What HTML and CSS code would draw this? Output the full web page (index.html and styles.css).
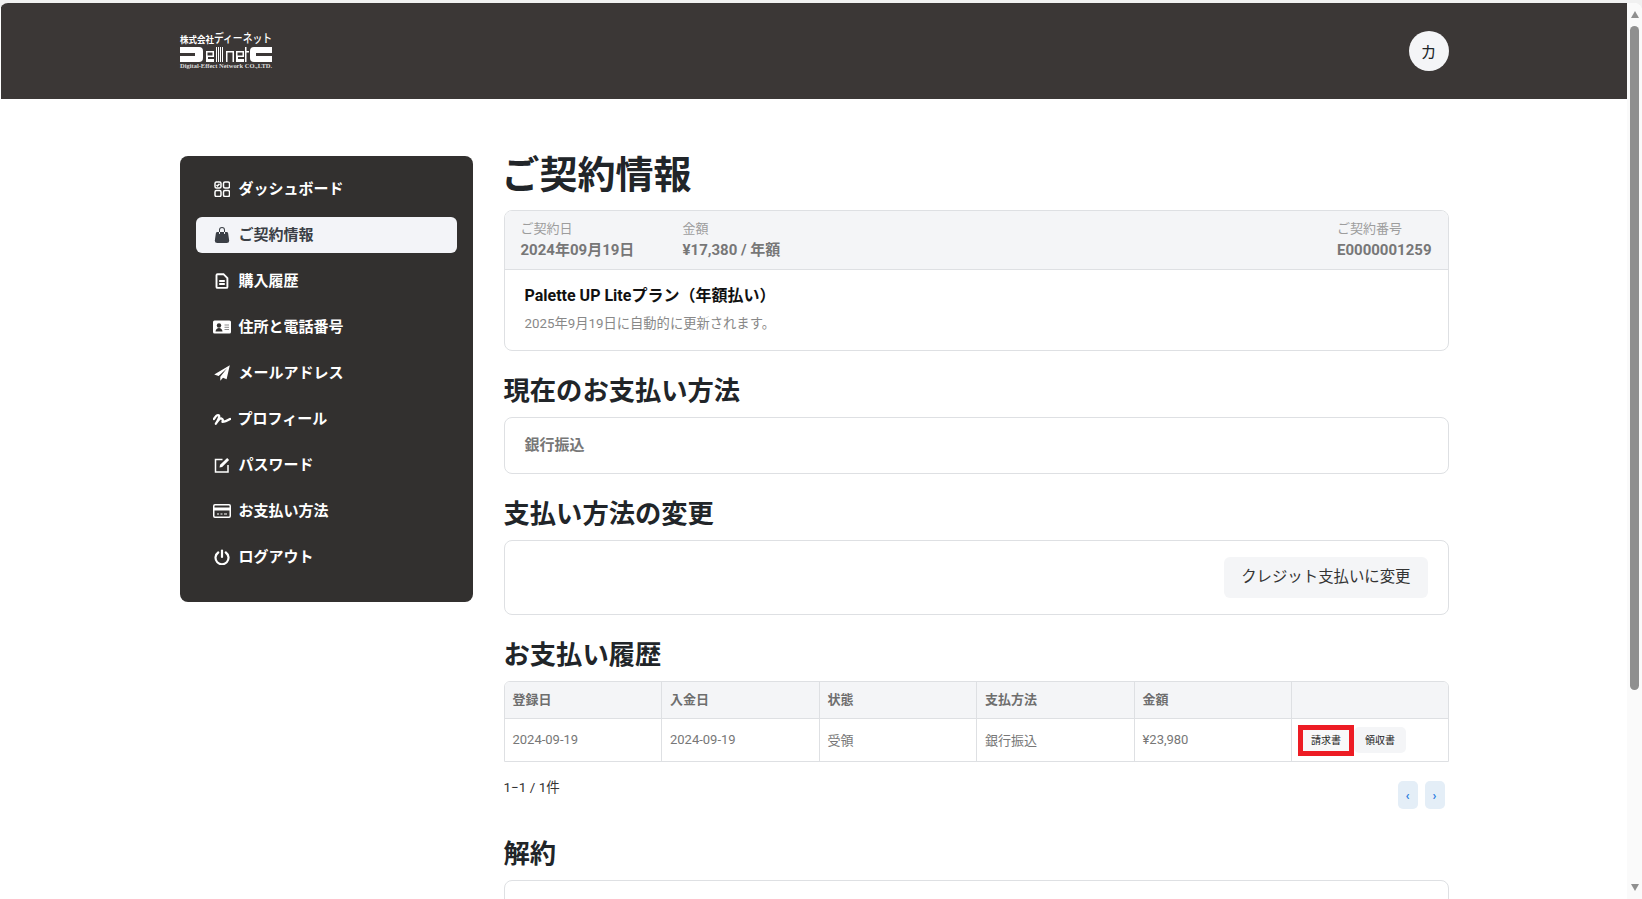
FILE: index.html
```html
<!DOCTYPE html>
<html lang="ja">
<head>
  <meta charset="utf-8">
  <title>ご契約情報</title>
  <link rel="stylesheet" href="styles.css">
</head>
<body>
  <div class="window">
    <div class="page">
      <header class="topbar">
        <div class="container topbar-inner">
          <svg class="logo" width="92" height="36" viewBox="0 0 92 36" aria-label="Dellnet">
            <text class="logo-jp" x="0" y="10" textLength="34" lengthAdjust="spacingAndGlyphs">株式会社</text>
            <text class="logo-kana" x="34" y="10" textLength="58" lengthAdjust="spacingAndGlyphs">ディーネット</text>
            <g fill="#fff">
              <path d="M0 14h19q4 0 4 4v7q0 4-4 4H0v-6h15v-3H0z"/>
              <path d="M26 18h8v6h-6v2h6v3h-8zM27.500 19.500v3h5v-3z" fill-rule="evenodd"/>
              <path d="M36 14h1v15h-1zM38 14h1v15h-1zM40 14h1v15h-1zM42 14h1v15h-1z"/>
              <path d="M46 18h8v11h-1.500v-9.500h-5v9.500h-1.500z"/>
              <path d="M56 18h8v6h-6v2h6v3h-8zM57.500 19.500v3h5v-3z" fill-rule="evenodd"/>
              <path d="M65 14h1.500v4h2.500v1.500h-2.500v9.500h-1.500z"/>
              <path d="M92 14H74q-4 0-4 4v7q0 4 4 4h18v-6H76v-3h16z"/>
            </g>
            <text class="logo-en" x="0" y="35" textLength="92" lengthAdjust="spacingAndGlyphs">Digital-Effect Network CO.,LTD.</text>
          </svg>
          <div class="avatar">カ</div>
        </div>
      </header>

      <div class="container content">
        <nav class="sidebar">
          <a class="nav-item">
            <svg class="nav-icon" viewBox="0 0 16 16" fill="none" stroke="currentColor" stroke-width="1.500"><rect x="1" y="1" width="6" height="6" rx="1.500"/><rect x="9.500" y="1" width="6" height="6" rx="1.500"/><rect x="1" y="9.500" width="6" height="6" rx="1.500"/><rect x="9.500" y="9.500" width="6" height="6" rx="1.500"/><path d="M2.500 4l1 1 2-2.200"/></svg>
            ダッシュボード
          </a>
          <a class="nav-item active">
            <svg class="nav-icon" viewBox="0 0 16 16" fill="currentColor"><path d="M8 1a2 2 0 0 0-2 2v2H5V3a3 3 0 1 1 6 0v2h-1V3a2 2 0 0 0-2-2zM5 5H3.360a1.500 1.500 0 0 0-1.483 1.277L.85 13.130A2.500 2.500 0 0 0 3.322 16h9.355a2.500 2.500 0 0 0 2.473-2.870l-1.028-6.853A1.500 1.500 0 0 0 12.640 5H11v1.500a.5.5 0 0 1-1 0V5H6v1.500a.5.5 0 0 1-1 0V5z"/></svg>
            ご契約情報
          </a>
          <a class="nav-item">
            <svg class="nav-icon" viewBox="0 0 16 16" fill="none" stroke="currentColor" stroke-width="1.900"><path d="M2.500 2.200a1 1 0 0 1 1-1h6l3.900 3.900v8.800a1 1 0 0 1-1 1H3.500a1 1 0 0 1-1-1z"/><path d="M5.200 8h5.600M5.200 11h5.600"/></svg>
            購入履歴
          </a>
          <a class="nav-item">
            <svg class="nav-icon icon-wide" viewBox="0 0 18 13"><rect width="18" height="13" rx="1.500" fill="currentColor"/><circle cx="6" cy="5" r="2.200" fill="#32302f"/><path d="M2.500 11q.5-3.500 3.500-3.500t3.500 3.500z" fill="#32302f"/><path d="M11.500 4.500h4.500M11.500 6.800h4.500M11.500 9h4.500" stroke="#8a8a8a" stroke-width="1"/></svg>
            住所と電話番号
          </a>
          <a class="nav-item">
            <svg class="nav-icon icon-wide" viewBox="0 0 16 16" fill="currentColor"><path d="M15.800.2L.2 9.400l4.400 1.700L13 3.200 6.300 11.800v3.900l2.700-3 3.600 1.600z"/></svg>
            メールアドレス
          </a>
          <a class="nav-item item-tight">
            <svg class="nav-icon icon-wide" viewBox="0 0 19 12" fill="none" stroke="currentColor" stroke-width="2.400" stroke-linecap="round" stroke-linejoin="round"><path d="M1 6q3-5 5-4t-3 9q4-6 6-5.500t1 3.500q3 0 8-3"/></svg>
            プロフィール
          </a>
          <a class="nav-item">
            <svg class="nav-icon" viewBox="0 0 16 16" fill="none" stroke="currentColor" stroke-width="1.500"><path d="M8.500 2.500H1.500v12.500h12.500V8"/><path d="M5.500 10.500l.6-2.800L13.200 1l1.900 1.900-7 7z" fill="currentColor" stroke="none"/></svg>
            パスワード
          </a>
          <a class="nav-item">
            <svg class="nav-icon icon-wide" viewBox="0 0 18 14" fill="none" stroke="currentColor" stroke-width="1.500"><rect x=".75" y=".75" width="16.500" height="12.500" rx="1.200"/><path d="M1 5h16" stroke-width="3"/><path d="M4 10h2M7.500 10h2M11 10h3" stroke-width="1.200"/></svg>
            お支払い方法
          </a>
          <a class="nav-item">
            <svg class="nav-icon" viewBox="0 0 16 16" fill="none" stroke="currentColor" stroke-width="2.200" stroke-linecap="round"><path d="M8 1.500v6.500"/><path d="M4.200 3.500a6.500 6.500 0 1 0 7.600 0"/></svg>
            ログアウト
          </a>
        </nav>

        <main class="main">
          <h1 class="page-title">ご契約情報</h1>

          <div class="card">
            <div class="card-head">
              <div class="meta meta-date">
                <span class="meta-label">ご契約日</span>
                <span class="meta-value">2024年09月19日</span>
              </div>
              <div class="meta">
                <span class="meta-label">金額</span>
                <span class="meta-value">¥17,380 / 年額</span>
              </div>
              <div class="meta meta-number">
                <span class="meta-label">ご契約番号</span>
                <span class="meta-value">E0000001259</span>
              </div>
            </div>
            <div class="card-body">
              <div class="plan-name">Palette UP Liteプラン（年額払い）</div>
              <div class="plan-note">2025年9月19日に自動的に更新されます。</div>
            </div>
          </div>

          <h2 class="section-title">現在のお支払い方法</h2>
          <div class="card method-card">銀行振込</div>

          <h2 class="section-title">支払い方法の変更</h2>
          <div class="card change-card">
            <button class="btn-change">クレジット支払いに変更</button>
          </div>

          <h2 class="section-title">お支払い履歴</h2>
          <div class="table-wrap">
            <table class="history">
              <colgroup>
                <col class="col-data">
                <col class="col-data">
                <col class="col-data">
                <col class="col-data">
                <col class="col-data">
                <col>
              </colgroup>
              <thead>
                <tr>
                  <th>登録日</th>
                  <th>入金日</th>
                  <th>状態</th>
                  <th>支払方法</th>
                  <th>金額</th>
                  <th></th>
                </tr>
              </thead>
              <tbody>
                <tr>
                  <td>2024-09-19</td>
                  <td>2024-09-19</td>
                  <td>受領</td>
                  <td>銀行振込</td>
                  <td>¥23,980</td>
                  <td class="cell-actions">
                    <div class="actions">
                      <button class="btn-doc marked">請求書</button>
                      <button class="btn-doc">領収書</button>
                    </div>
                  </td>
                </tr>
              </tbody>
            </table>
          </div>

          <div class="pager-row">
            <span class="pager-count">1−1 / 1件</span>
            <div class="pager">
              <button class="pager-btn">‹</button>
              <button class="pager-btn">›</button>
            </div>
          </div>

          <h2 class="section-title cancel-title">解約</h2>
          <div class="card cancel-card"></div>
        </main>
      </div>
    </div>

    <div class="scrollbar">
      <span class="arrow-up"></span>
      <span class="thumb"></span>
      <span class="arrow-down"></span>
    </div>
  </div>
</body>
</html>
```

FILE: styles.css
```css
html, body {
  margin: 0;
  padding: 0;
  height: 100%;
  overflow: hidden;
}

body {
  font-family: Roboto, 'Noto Sans CJK JP', sans-serif;
  background: #f1f1f1;
  color: #212529;
}

.window {
  display: flex;
  height: 896px;
  margin-top: 3px;
  background: #fff;
  border-radius: 8px 8px 0 0;
  overflow: hidden;
}

.page {
  flex: 1;
  min-width: 0;
  height: 100%;
  overflow: hidden;
  padding-left: 1px;
}

.container {
  width: 1269px;
  margin: 0 auto;
}

/* Header */
.topbar {
  height: 96px;
  background: #3b3736;
}

.topbar-inner {
  display: flex;
  align-items: center;
  justify-content: space-between;
  height: 100%;
}

.logo {
  overflow: visible;
}

.logo-jp {
  font-size: 9px;
  font-weight: 700;
  fill: #fff;
}

.logo-kana {
  font-size: 12px;
  font-weight: 500;
  fill: #fff;
}

.logo-en {
  font-family: 'Liberation Serif', serif;
  font-size: 6.500px;
  font-weight: 700;
  fill: #ddd;
}

.avatar {
  display: flex;
  align-items: center;
  justify-content: center;
  width: 40px;
  height: 40px;
  border-radius: 50%;
  background: #f4f5f7;
  font-size: 16px;
  color: #212529;
}

.content {
  display: flex;
  align-items: flex-start;
  gap: 31px;
  padding-top: 54px;
}

/* Sidebar */
.sidebar {
  flex: 0 0 293px;
  box-sizing: border-box;
  display: flex;
  flex-direction: column;
  gap: 10px;
  height: 446px;
  margin-top: 3px;
  padding: 15px 16px;
  background: #32302f;
  border-radius: 8px;
}

.nav-item {
  display: flex;
  align-items: center;
  gap: 9px;
  box-sizing: border-box;
  height: 36px;
  padding: 0 0 4px 18px;
  font-size: 15px;
  font-weight: 700;
  color: #fff;
  border-radius: 6px;
}

.nav-item.active {
  background: #f3f4f8;
  color: #3b3f46;
}

.item-tight {
  gap: 8px;
}

.nav-icon {
  flex: 0 0 16px;
  width: 16px;
  height: 16px;
  margin-top: 3px;
}

.icon-wide {
  flex-basis: 18px;
  width: 18px;
  margin-left: -1px;
  margin-right: -1px;
}

/* Main column */
.main {
  flex: 1;
  min-width: 0;
}

.page-title {
  margin: 0 0 12px -2px;
  font-size: 38px;
  font-weight: 700;
  line-height: 45px;
}

.section-title {
  margin: 24px 0 10px;
  font-size: 26.300px;
  font-weight: 700;
  line-height: 32px;
}

.card {
  border: 1px solid #dee0e3;
  border-radius: 8px;
  background: #fff;
  overflow: hidden;
}

.card-head {
  display: flex;
  height: 59px;
  padding: 7px 16px 0;
  box-sizing: border-box;
  background: #f4f5f7;
  border-bottom: 1px solid #dee0e3;
}

.meta {
  display: flex;
  flex-direction: column;
}

.meta-date {
  width: 162px;
}

.meta-number {
  margin-left: auto;
}

.meta-label {
  font-size: 13px;
  line-height: 21px;
  color: #9d9d9d;
}

.meta-value {
  font-size: 15px;
  font-weight: 700;
  line-height: 22px;
  color: #777;
}

.card-body {
  height: 80px;
  box-sizing: border-box;
  padding: 13px 20px 0;
}

.plan-name {
  font-size: 16px;
  font-weight: 700;
  line-height: 26px;
  color: #111;
}

.plan-note {
  margin-top: 4px;
  font-size: 13.300px;
  line-height: 22px;
  color: #888;
}

.method-card {
  box-sizing: border-box;
  height: 57px;
  padding: 0 20px 5px;
  display: flex;
  align-items: center;
  font-size: 15px;
  font-weight: 700;
  color: #777;
}

.change-card {
  height: 73px;
  padding: 0 20px;
  display: flex;
  align-items: center;
  justify-content: flex-end;
}

.btn-change {
  height: 41px;
  padding: 0 17px 6px;
  border: 0;
  border-radius: 6px;
  background: #f4f5f7;
  font: 400 15.400px Roboto, 'Noto Sans CJK JP', sans-serif;
  color: #333;
}

/* History table */
.table-wrap {
  border: 1px solid #dee0e3;
  border-radius: 6px 6px 0 0;
  overflow: hidden;
}

.history {
  width: 100%;
  table-layout: fixed;
  border-collapse: separate;
  border-spacing: 0;
  font-size: 13px;
}

.col-data {
  width: 157.500px;
}

.history th,
.history td {
  padding: 0 8px 2px;
  text-align: left;
  border-right: 1px solid #dee0e3;
}

.history th:last-child,
.history td:last-child {
  border-right: 0;
}

.history th {
  height: 32px;
  padding-bottom: 4px;
  background: #f4f5f7;
  font-weight: 700;
  color: #6e6e6e;
  border-bottom: 1px solid #dee0e3;
}

.history td {
  height: 40px;
  color: #777;
}

.history .cell-actions {
  padding: 0 0 0 11px;
}

.actions {
  display: flex;
  align-items: center;
  gap: 5px;
}

.btn-doc {
  height: 26px;
  padding: 0 11px 2px;
  border: 0;
  border-radius: 5px;
  background: #f4f5f7;
  font: 400 10px Roboto, 'Noto Sans CJK JP', sans-serif;
  color: #222;
}

/* red annotation box around the invoice button */
.btn-doc.marked {
  height: 21px;
  padding: 0 8px 2px;
  border-radius: 0;
  outline: 5px solid #ed1c24;
  background: #f8f8f9;
}

.pager-row {
  display: flex;
  justify-content: space-between;
  align-items: flex-start;
  padding: 15px 4px 0 0;
}

.pager-count {
  font-size: 13.500px;
  line-height: 20px;
  color: #333;
}

.pager {
  display: flex;
  gap: 7px;
  margin-top: 4px;
}

.pager-btn {
  width: 20px;
  height: 28px;
  padding: 0;
  border: 0;
  border-radius: 5px;
  background: #e4eef7;
  font: 700 13px Roboto, sans-serif;
  color: #2b7de0;
}

.cancel-title {
  margin-top: 29px;
}

.cancel-card {
  height: 120px;
}

/* Fake scrollbar */
.scrollbar {
  flex: 0 0 15px;
  display: flex;
  flex-direction: column;
  align-items: center;
  background: #fafafa;
}

.arrow-up {
  margin-top: 8px;
  border: 4.500px solid transparent;
  border-top: 0;
  border-bottom: 7px solid #8f8f8f;
}

.thumb {
  width: 9px;
  height: 664px;
  margin-top: 8px;
  border-radius: 5px;
  background: #8f8f8f;
}

.arrow-down {
  margin-top: auto;
  margin-bottom: 8px;
  border: 4.500px solid transparent;
  border-bottom: 0;
  border-top: 7px solid #8f8f8f;
}
```
